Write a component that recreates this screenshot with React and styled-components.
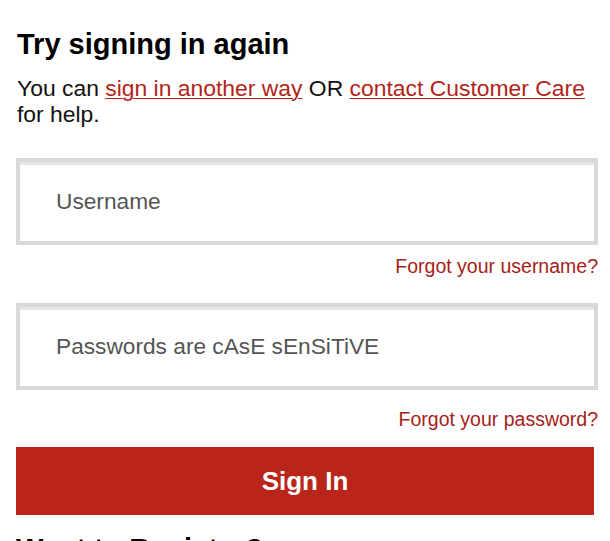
import styled, { createGlobalStyle } from 'styled-components';

const GlobalStyle = createGlobalStyle`
  body {
    margin: 0;
    background: #ffffff;
    font-family: "Liberation Sans", Arial, sans-serif;
    color: #111111;
  }
`;

const Page = styled.div`
  padding: 26px 12px 0 16px;
  overflow: hidden;
  height: 541px;
  box-sizing: border-box;
`;

const Title = styled.h1`
  margin: 0 0 0 1px;
  font-size: 29px;
  line-height: 36px;
  font-weight: 700;
  color: #000000;
`;

const Intro = styled.p`
  margin: 13px 0 0 1px;
  font-size: 22.9px;
  line-height: 26px;
  color: #111111;
`;

const TextLink = styled.a`
  color: #b3241b;
  text-decoration: underline;
  text-underline-offset: 2px;
  text-decoration-thickness: 1px;
`;

const Form = styled.form`
  margin-top: 31px;
  display: flex;
  flex-direction: column;
`;

const Field = styled.input`
  box-sizing: border-box;
  width: 100%;
  height: 87px;
  border: 4px solid #d9d9d9;
  box-shadow: inset 0 3px 0 #e4e4e4;
  padding: 0 0 0 36px;
  font-family: "Liberation Sans", Arial, sans-serif;
  font-size: 22.7px;
  color: #333333;
  outline: none;
  background: #ffffff;

  &::placeholder {
    color: #555555;
  }
`;

const HelpRow = styled.div`
  display: flex;
  justify-content: flex-end;
  margin: ${({ $top }) => $top}px 0 ${({ $bottom }) => $bottom}px;
`;

const HelpLink = styled.a`
  font-size: 19.5px;
  line-height: 24px;
  color: #a52219;
  text-decoration: none;
`;

const SubmitButton = styled.button`
  width: calc(100% - 4px);
  height: 68px;
  border: none;
  background: #b9251a;
  color: #ffffff;
  font-family: "Liberation Sans", Arial, sans-serif;
  font-size: 26px;
  font-weight: 700;
  cursor: pointer;
`;

const NextTitle = styled.h2`
  margin: 16px 0 0;
  font-size: 29px;
  line-height: 36px;
  font-weight: 700;
  color: #000000;
`;

export default function App() {
  return (
    <>
      <GlobalStyle />
      <Page>
        <Title>Try signing in again</Title>
        <Intro>
          You can <TextLink href="#">sign in another way</TextLink> OR{' '}
          <TextLink href="#">contact Customer Care</TextLink> for help.
        </Intro>
        <Form onSubmit={(e) => e.preventDefault()}>
          <Field type="text" placeholder="Username" />
          <HelpRow $top={9} $bottom={25}>
            <HelpLink href="#">Forgot your username?</HelpLink>
          </HelpRow>
          <Field type="password" placeholder="Passwords are cAsE sEnSiTiVE" />
          <HelpRow $top={17} $bottom={16}>
            <HelpLink href="#">Forgot your password?</HelpLink>
          </HelpRow>
          <SubmitButton type="submit">Sign In</SubmitButton>
        </Form>
        <NextTitle>Want to Register?</NextTitle>
      </Page>
    </>
  );
}
